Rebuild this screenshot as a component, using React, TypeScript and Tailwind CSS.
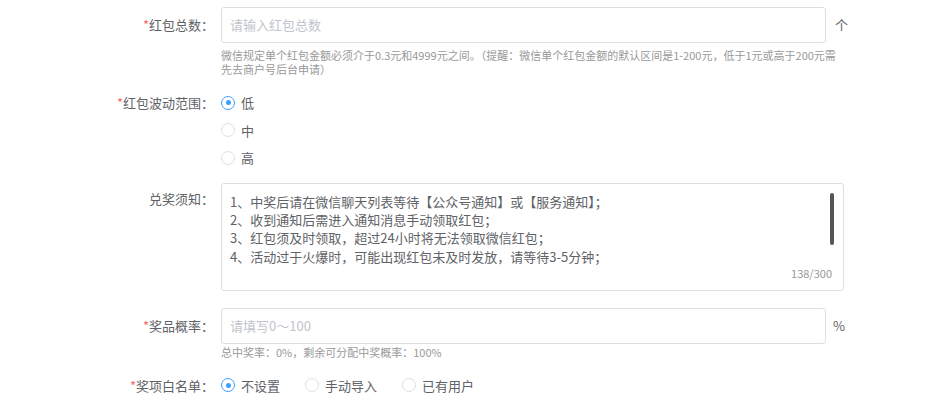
import React from "react";

const font = { fontFamily: '"Noto Sans CJK SC", "Noto Sans", sans-serif' };

function Label({ text, required }: { text: string; required?: boolean }) {
  return (
    <div className="w-[221px] shrink-0 pr-[7px] text-right text-[13px] text-[#606266]">
      {required && <span className="text-[#f56c6c]">*</span>}
      {text}：
    </div>
  );
}

function Radio({ checked, label }: { checked?: boolean; label: string }) {
  return (
    <div className="flex items-center">
      <span
        className={
          checked
            ? "flex h-[14px] w-[14px] items-center justify-center rounded-full border border-[#409eff] bg-white"
            : "h-[14px] w-[14px] rounded-full border border-[#dcdfe6] bg-white"
        }
      >
        {checked && <span className="h-[5px] w-[5px] rounded-full bg-[#409eff]" />}
      </span>
      <span className="ml-[6px] text-[13px] text-[#606266]">{label}</span>
    </div>
  );
}

export default function App() {
  return (
    <div className="h-[415px] w-[932px] overflow-hidden bg-white" style={font}>
      {/* 红包总数 */}
      <div className="flex items-center pt-[7px]">
        <Label text="红包总数" required />
        <div className="flex h-[36px] w-[605px] items-center rounded-[3px] border border-[#dcdfe6] px-[8px] text-[13px] text-[#c0c4cc]">
          请输入红包总数
        </div>
        <span className="ml-[9px] text-[13px] text-[#606266]">个</span>
      </div>
      <div className="flex">
        <div className="w-[221px] shrink-0" />
        <div className="mt-[5px] w-[622px] text-[11px] leading-[14px] text-[#999]">
          微信规定单个红包金额必须介于0.3元和4999元之间。（提醒：微信单个红包金额的默认区间是1-200元，低于1元或高于200元需先去商户号后台申请）
        </div>
      </div>

      {/* 红包波动范围 */}
      <div className="mt-[17px] flex">
        <Label text="红包波动范围" required />
        <div className="flex flex-col gap-[8px]">
          <Radio checked label="低" />
          <Radio label="中" />
          <Radio label="高" />
        </div>
      </div>

      {/* 兑奖须知 */}
      <div className="mt-[15px] flex">
        <div className="pt-[6px]">
          <Label text="兑奖须知" />
        </div>
        <div className="relative h-[108px] w-[623px] rounded-[3px] border border-[#dcdfe6] pl-[8px] pt-[9px] text-[13px] leading-[18.4px] text-[#606266]">
          <div>1、中奖后请在微信聊天列表等待【公众号通知】或【服务通知】；</div>
          <div>2、收到通知后需进入通知消息手动领取红包；</div>
          <div>3、红包须及时领取，超过24小时将无法领取微信红包；</div>
          <div>4、活动过于火爆时，可能出现红包未及时发放，请等待3-5分钟；</div>
          <div className="absolute right-[9px] top-[9px] h-[52px] w-[4px] rounded-[2px] bg-[#555]" />
          <div className="absolute bottom-[10px] right-[11px] text-[11px] leading-[14px] text-[#999]">138/300</div>
        </div>
      </div>

      {/* 奖品概率 */}
      <div className="mt-[17px] flex items-center">
        <Label text="奖品概率" required />
        <div className="flex h-[36px] w-[605px] items-center rounded-[3px] border border-[#dcdfe6] px-[8px] text-[13px] text-[#c0c4cc]">
          请填写0～100
        </div>
        <span className="ml-[7px] text-[13px] text-[#606266]">%</span>
      </div>
      <div className="flex">
        <div className="w-[221px] shrink-0" />
        <div className="mt-[1px] text-[11px] leading-[14px] text-[#999]">总中奖率：0%，剩余可分配中奖概率：100%</div>
      </div>

      {/* 奖项白名单 */}
      <div className="mt-[17px] flex items-center">
        <Label text="奖项白名单" required />
        <div className="flex gap-[25px]">
          <Radio checked label="不设置" />
          <Radio label="手动导入" />
          <Radio label="已有用户" />
        </div>
      </div>
    </div>
  );
}
